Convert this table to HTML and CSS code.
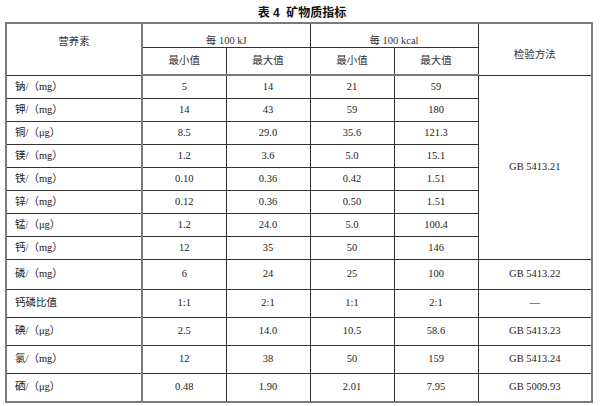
FILE: index.html
```html
<!DOCTYPE html>
<html lang="zh-CN">
<head>
<meta charset="utf-8">
<title>表 4 矿物质指标</title>
<link rel="stylesheet" href="styles.css">
</head>
<body>
<div class="caption">表 4&nbsp; 矿物质指标</div>
<table class="grid">
  <colgroup>
    <col class="c-name">
    <col class="c-val">
    <col class="c-val">
    <col class="c-val">
    <col class="c-val">
    <col class="c-method">
  </colgroup>
  <thead>
    <tr class="h1">
      <th rowspan="2" class="th-name">营养素</th>
      <th colspan="2" class="th-group">每 100 kJ</th>
      <th colspan="2" class="th-group">每 100 kcal</th>
      <th rowspan="2" class="th-method">检验方法</th>
    </tr>
    <tr class="h2">
      <th>最小值</th><th>最大值</th><th>最小值</th><th>最大值</th>
    </tr>
  </thead>
  <tbody>
    <tr class="r-s"><td class="name">钠/（mg）</td><td>5</td><td>14</td><td>21</td><td>59</td><td rowspan="8" class="method">GB 5413.21</td></tr>
    <tr class="r-s"><td class="name">钾/（mg）</td><td>14</td><td>43</td><td>59</td><td>180</td></tr>
    <tr class="r-s"><td class="name">铜/（μg）</td><td>8.5</td><td>29.0</td><td>35.6</td><td>121.3</td></tr>
    <tr class="r-s"><td class="name">镁/（mg）</td><td>1.2</td><td>3.6</td><td>5.0</td><td>15.1</td></tr>
    <tr class="r-s"><td class="name">铁/（mg）</td><td>0.10</td><td>0.36</td><td>0.42</td><td>1.51</td></tr>
    <tr class="r-s"><td class="name">锌/（mg）</td><td>0.12</td><td>0.36</td><td>0.50</td><td>1.51</td></tr>
    <tr class="r-s"><td class="name">锰/（μg）</td><td>1.2</td><td>24.0</td><td>5.0</td><td>100.4</td></tr>
    <tr class="r-s"><td class="name">钙/（mg）</td><td>12</td><td>35</td><td>50</td><td>146</td></tr>
    <tr class="r-l r-first"><td class="name">磷/（mg）</td><td>6</td><td>24</td><td>25</td><td>100</td><td class="method">GB 5413.22</td></tr>
    <tr class="r-l"><td class="name">钙磷比值</td><td>1:1</td><td>2:1</td><td>1:1</td><td>2:1</td><td class="method">—</td></tr>
    <tr class="r-l"><td class="name">碘/（μg）</td><td>2.5</td><td>14.0</td><td>10.5</td><td>58.6</td><td class="method">GB 5413.23</td></tr>
    <tr class="r-l"><td class="name">氯/（mg）</td><td>12</td><td>38</td><td>50</td><td>159</td><td class="method">GB 5413.24</td></tr>
    <tr class="r-l r-last"><td class="name">硒/（μg）</td><td>0.48</td><td>1.90</td><td>2.01</td><td>7.95</td><td class="method">GB 5009.93</td></tr>
  </tbody>
</table>
</body>
</html>
```
FILE: styles.css
```css
html, body {
  margin: 0;
  padding: 0;
  background: #ffffff;
}
body {
  font-family: "Liberation Serif", "Noto Sans CJK SC", serif;
  color: #222222;
  font-size: 10.5px;
}
.caption {
  height: 22px;
  line-height: 26px;
  text-align: center;
  font-family: "Liberation Sans", "Noto Sans CJK SC", sans-serif;
  font-weight: bold;
  font-size: 12px;
  color: #111111;
  padding-left: 4px;
}
.grid {
  margin-left: 5px;
  width: 586px;
  border-collapse: collapse;
  table-layout: fixed;
  border: 2px solid #7a7a7a;
}
.c-name { width: 136px; }
.c-val { width: 84px; }
.c-method { width: 114px; }
.grid th,
.grid td {
  border: 1px solid #333333;
  padding: 0;
  text-align: center;
  vertical-align: middle;
  font-weight: normal;
  line-height: 12px;
}
.grid th {
  color: #333333;
}
.grid th.th-name {
  border-right: 2px solid #7a7a7a;
  vertical-align: top;
  padding-top: 12px;
}
.grid th.th-method {
  vertical-align: top;
  padding-top: 25px;
}
.grid th.th-group {
  vertical-align: bottom;
  padding-bottom: 0;
}
.grid thead tr.h1 { height: 24px; }
.grid thead tr.h2 { height: 28px; }
.grid thead tr.h2 th { border-bottom: 2px solid #7a7a7a; }
.grid td.name {
  text-align: left;
  padding-left: 8px;
  border-right: 2px solid #7a7a7a;
}
.grid tr.r-s { height: 23px; }
.grid tr.r-l { height: 28px; }
.grid tr.r-first { height: 30px; }
.grid tr.r-last { height: 29px; }
```
